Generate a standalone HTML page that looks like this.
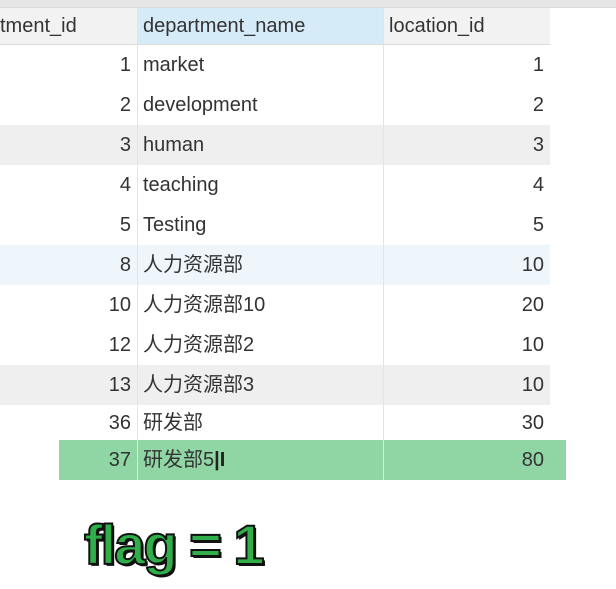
<!DOCTYPE html>
<html><head><meta charset="utf-8"><style>
html,body{margin:0;padding:0;width:616px;height:589px;background:#fff;overflow:hidden;font-family:"Liberation Sans","Noto Sans CJK SC",sans-serif;}
.top{position:absolute;left:0;top:0;width:616px;height:7px;background:#e6e6e6;border-bottom:1px solid #d8d8d8;}
.row{position:absolute;left:0;width:550px;height:40px;font-size:20px;color:#333;}
.row div{position:absolute;top:0;height:40px;line-height:40px;box-sizing:border-box;}
.c1{left:0;width:138px;text-align:right;padding-right:6px;border-right:1px solid #e4e4e4;}
.c2{left:138px;width:246px;padding-left:5px;border-right:1px solid #e4e4e4;}
.c3{left:384px;width:166px;text-align:right;padding-right:6px;}
.hdr{top:8px;height:36px;background:#f2f2f2;border-bottom:1px solid #ddd;}
.hdr div{height:36px;line-height:36px;}
.hdr .c1{text-align:left;padding-left:0;}
.hdr .c2{background:#d6ebf8;}
.hdr .c3{text-align:left;padding-left:5px;}
.g{background:#efefef}.b{background:#eef6fc}
.green{position:absolute;left:59px;top:440px;width:507px;height:40px;background:#8fd6a4;}
.flag{position:absolute;left:84px;top:512px;font-size:56px;font-weight:bold;color:#2fae4a;-webkit-text-stroke:2px #111;letter-spacing:-2px;text-shadow:2px 2px 0 #111;}
</style></head><body>
<div class="top"></div>
<div class="row hdr"><div class="c1">tment_id</div><div class="c2">department_name</div><div class="c3">location_id</div></div>
<div class="row" style="top:45px"><div class="c1">1</div><div class="c2">market</div><div class="c3">1</div></div>
<div class="row" style="top:85px"><div class="c1">2</div><div class="c2">development</div><div class="c3">2</div></div>
<div class="row g" style="top:125px"><div class="c1">3</div><div class="c2">human</div><div class="c3">3</div></div>
<div class="row" style="top:165px"><div class="c1">4</div><div class="c2">teaching</div><div class="c3">4</div></div>
<div class="row" style="top:205px"><div class="c1">5</div><div class="c2">Testing</div><div class="c3">5</div></div>
<div class="row b" style="top:245px"><div class="c1">8</div><div class="c2">人力资源部</div><div class="c3">10</div></div>
<div class="row" style="top:285px"><div class="c1">10</div><div class="c2">人力资源部10</div><div class="c3">20</div></div>
<div class="row" style="top:325px"><div class="c1">12</div><div class="c2">人力资源部2</div><div class="c3">10</div></div>
<div class="row g" style="top:365px"><div class="c1">13</div><div class="c2">人力资源部3</div><div class="c3">10</div></div>
<div class="row" style="top:405px;height:35px"><div class="c1" style="line-height:36px">36</div><div class="c2" style="line-height:36px">研发部</div><div class="c3" style="line-height:36px">30</div></div>
<div class="green"></div>
<div class="row" style="top:440px"><div class="c1">37</div><div class="c2">研发部5<span style="font-weight:bold;color:#222">|I</span></div><div class="c3">80</div></div>
<div class="flag">flag = 1</div>
</body></html>
